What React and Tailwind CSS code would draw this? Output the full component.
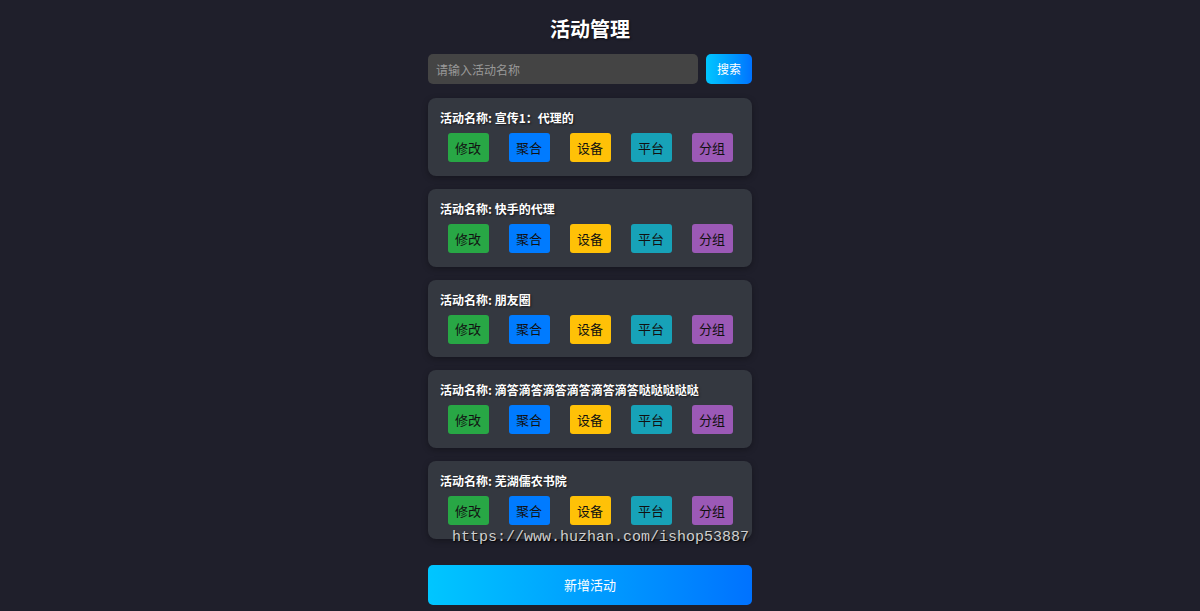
import React from 'react';

const activities = ['宣传1：代理的', '快手的代理', '朋友圈', '滴答滴答滴答滴答滴答滴答哒哒哒哒哒', '芜湖儒农书院'];

const actions = [
  { label: '修改', cls: 'bg-[#28a745]' },
  { label: '聚合', cls: 'bg-[#007bff]' },
  { label: '设备', cls: 'bg-[#ffc107]' },
  { label: '平台', cls: 'bg-[#17a2b8]' },
  { label: '分组', cls: 'bg-[#9b59b6]' },
];

const font = 'font-["Noto_Sans_CJK_SC","Noto_Sans",sans-serif]';

export default function App() {
  return (
    <div className={`min-h-[611px] bg-[#1f1f2b] ${font} relative pr-5`}>
      <div className="w-[324px] mx-auto pt-[14px] pb-[7px]">
        <h1 className="text-center text-white text-[20px] font-bold leading-[30px] [text-shadow:1px_1px_2px_rgba(0,0,0,0.6)]">活动管理</h1>

        <div className="flex gap-2 mt-[10px]">
          <input
            placeholder="请输入活动名称"
            className="flex-1 h-[30px] rounded-[5px] bg-[#444] px-2 text-[12px] text-white placeholder:text-[#999] outline-none"
          />
          <button className="w-[46px] h-[30px] rounded-[5px] bg-gradient-to-r from-[#00c6ff] to-[#0072ff] text-white text-[12px]">搜索</button>
        </div>

        <div className="flex flex-col gap-[13px] mt-[14px]">
          {activities.map((name) => (
            <div key={name} className="bg-[#343840] rounded-[8px] px-3 pt-[12px] pb-[13.75px] shadow-[0_2px_6px_rgba(0,0,0,0.3)]">
              <p className="text-white text-[12px] font-bold leading-[16px] [text-shadow:1px_1px_2px_rgba(0,0,0,0.6)]">活动名称: {name}</p>
              <div className="flex justify-center gap-5 mt-[7px]">
                {actions.map((a) => (
                  <button key={a.label} className={`${a.cls} w-[41px] h-[29px] rounded-[3px] text-[13px] text-[#111]`}>
                    {a.label}
                  </button>
                ))}
              </div>
            </div>
          ))}
        </div>

        <button className="w-full h-[40px] mt-[26px] rounded-[5px] bg-gradient-to-r from-[#00c6ff] to-[#0072ff] text-white text-[13px]">新增活动</button>
      </div>

      <div className="absolute left-[452px] top-[528px] text-[15px] leading-[20px] text-[#cfcfcf] font-['Liberation_Mono',monospace] [text-shadow:1px_1px_1px_rgba(0,0,0,0.8)] pointer-events-none">
        https://www.huzhan.com/ishop53887
      </div>
    </div>
  );
}
